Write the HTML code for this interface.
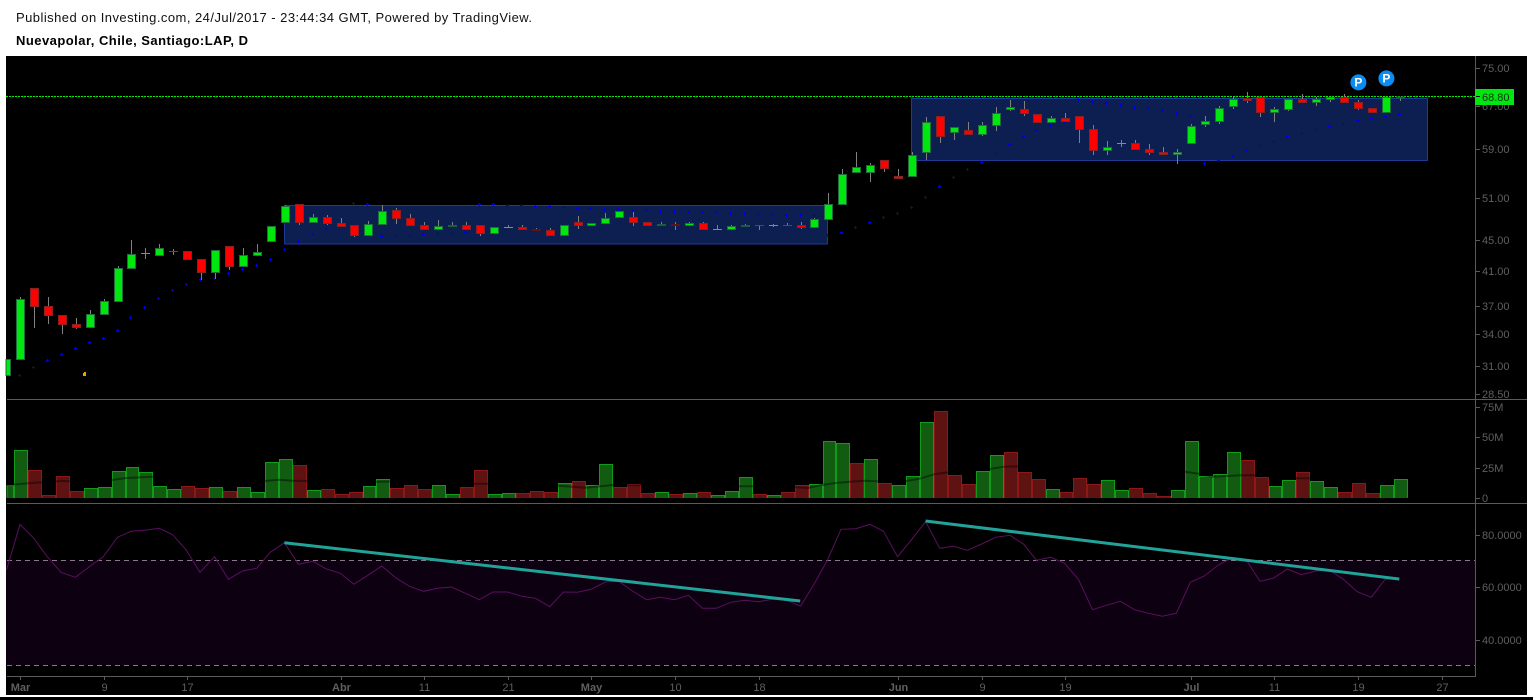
<!DOCTYPE html>
<html><head><meta charset="utf-8"><title>Nuevapolar, Chile, Santiago:LAP, D</title>
<style>html,body{margin:0;padding:0;background:#fff;width:1533px;height:700px;overflow:hidden}svg{display:block}text{font-family:"Liberation Sans",sans-serif}</style></head>
<body>
<svg xmlns="http://www.w3.org/2000/svg" width="1533" height="700" viewBox="0 0 1533 700">
<rect width="1533" height="700" fill="#fff"/>
<text x="16" y="22" font-size="13" fill="#111" textLength="516" lengthAdjust="spacing">Published on Investing.com, 24/Jul/2017 - 23:44:34 GMT, Powered by TradingView.</text>
<text x="16" y="45" font-size="13" font-weight="bold" fill="#000" textLength="232" lengthAdjust="spacing">Nuevapolar, Chile, Santiago:LAP, D</text>
<rect x="6" y="56" width="1521" height="639" fill="#000"/>
<rect x="0" y="697" width="1533" height="3" fill="#000"/>

<!-- blue boxes -->
<g shape-rendering="crispEdges" fill="#0d1e50" stroke="#1c3a96">
<rect x="284.5" y="205.5" width="543" height="38.5"/>
<rect x="911.5" y="98.5" width="516" height="62"/>
</g>

<!-- SAR crosses -->
<path shape-rendering="crispEdges" fill="none" stroke="#0000d8" d="M18 375.5h3m-1.5-1.5v3M32 367.5h3m-1.5-1.5v3M46 360.5h3m-1.5-1.5v3M60 354.5h3m-1.5-1.5v3M74 348.5h3m-1.5-1.5v3M88 342.5h3m-1.5-1.5v3M102 338.5h3m-1.5-1.5v3M116 330.5h3m-1.5-1.5v3M129 317.5h3m-1.5-1.5v3M143 307.5h3m-1.5-1.5v3M157 298.5h3m-1.5-1.5v3M171 290.5h3m-1.5-1.5v3M185 284.5h3m-1.5-1.5v3M199 279.5h3m-1.5-1.5v3M213 278.5h3m-1.5-1.5v3M227 273.5h3m-1.5-1.5v3M241 269.5h3m-1.5-1.5v3M255 265.5h3m-1.5-1.5v3M269 259.5h3m-1.5-1.5v3M283 249.5h3m-1.5-1.5v3M297 241.5h3m-1.5-1.5v3M311 234.5h3m-1.5-1.5v3M325 228.5h3m-1.5-1.5v3M352 203.5h3m-1.5-1.5v3M366 204.5h3m-1.5-1.5v3M380 236.5h3m-1.5-1.5v3M394 235.5h3m-1.5-1.5v3M408 235.5h3m-1.5-1.5v3M422 234.5h3m-1.5-1.5v3M436 233.5h3m-1.5-1.5v3M450 233.5h3m-1.5-1.5v3M464 232.5h3m-1.5-1.5v3M478 204.5h3m-1.5-1.5v3M492 204.5h3m-1.5-1.5v3M506 205.5h3m-1.5-1.5v3M520 205.5h3m-1.5-1.5v3M534 206.5h3m-1.5-1.5v3M548 206.5h3m-1.5-1.5v3M562 207.5h3m-1.5-1.5v3M576 208.5h3m-1.5-1.5v3M589 208.5h3m-1.5-1.5v3M603 209.5h3m-1.5-1.5v3M617 209.5h3m-1.5-1.5v3M631 210.5h3m-1.5-1.5v3M645 210.5h3m-1.5-1.5v3M659 211.5h3m-1.5-1.5v3M673 211.5h3m-1.5-1.5v3M687 212.5h3m-1.5-1.5v3M701 212.5h3m-1.5-1.5v3M715 212.5h3m-1.5-1.5v3M729 213.5h3m-1.5-1.5v3M743 213.5h3m-1.5-1.5v3M757 214.5h3m-1.5-1.5v3M771 214.5h3m-1.5-1.5v3M785 215.5h3m-1.5-1.5v3M799 215.5h3m-1.5-1.5v3M812 215.5h3m-1.5-1.5v3M826 235.5h3m-1.5-1.5v3M840 232.5h3m-1.5-1.5v3M854 227.5h3m-1.5-1.5v3M868 222.5h3m-1.5-1.5v3M882 217.5h3m-1.5-1.5v3M896 213.5h3m-1.5-1.5v3M910 207.5h3m-1.5-1.5v3M924 197.5h3m-1.5-1.5v3M938 186.5h3m-1.5-1.5v3M952 177.5h3m-1.5-1.5v3M966 169.5h3m-1.5-1.5v3M980 162.5h3m-1.5-1.5v3M994 153.5h3m-1.5-1.5v3M1008 144.5h3m-1.5-1.5v3M1022 136.5h3m-1.5-1.5v3M1035 130.5h3m-1.5-1.5v3M1049 125.5h3m-1.5-1.5v3M1063 122.5h3m-1.5-1.5v3M1077 99.5h3m-1.5-1.5v3M1091 101.5h3m-1.5-1.5v3M1105 103.5h3m-1.5-1.5v3M1119 105.5h3m-1.5-1.5v3M1133 107.5h3m-1.5-1.5v3M1147 108.5h3m-1.5-1.5v3M1161 110.5h3m-1.5-1.5v3M1175 113.5h3m-1.5-1.5v3M1189 116.5h3m-1.5-1.5v3M1203 163.5h3m-1.5-1.5v3M1217 160.5h3m-1.5-1.5v3M1231 156.5h3m-1.5-1.5v3M1245 150.5h3m-1.5-1.5v3M1258 145.5h3m-1.5-1.5v3M1272 141.5h3m-1.5-1.5v3M1286 136.5h3m-1.5-1.5v3M1300 133.5h3m-1.5-1.5v3M1314 129.5h3m-1.5-1.5v3M1328 126.5h3m-1.5-1.5v3M1342 123.5h3m-1.5-1.5v3M1356 120.5h3m-1.5-1.5v3M1370 118.5h3m-1.5-1.5v3M1384 116.5h3m-1.5-1.5v3M1398 114.5h3m-1.5-1.5v3"/>

<!-- price line -->
<path d="M6 96.5H1475" stroke="#00f000" stroke-dasharray="2 1" shape-rendering="crispEdges" fill="none"/>

<!-- wicks -->
<path shape-rendering="crispEdges" fill="none" stroke="#808080" d="M20.5 297V300M34.5 306V328M48.5 297V324M62.5 324V334M76.5 318V329M90.5 310V315M104.5 299V302M118.5 266V269M131.5 240V255M145.5 248V259M159.5 244V249M173.5 249V255M201.5 272V280M215.5 272V279M229.5 266V270M243.5 248V256M257.5 244V253M285.5 205V207M299.5 222V225M313.5 214V218M327.5 215V225M341.5 218V224M354.5 235V237M368.5 221V225M382.5 205V211M396.5 208V224M410.5 214V219M424.5 222V226M438.5 220V227M452.5 222V226M466.5 222V226M480.5 233V236M508.5 225V228M522.5 225V228M536.5 228V229M550.5 228V231M578.5 216V229M605.5 213V218M633.5 212V226M661.5 222V224M675.5 222V230M689.5 222V224M703.5 222V224M717.5 225V230M731.5 225V227M745.5 224V225M759.5 225V230M773.5 224V227M787.5 223V226M801.5 222V229M814.5 218V220M828.5 193V205M842.5 169V175M856.5 152V168M870.5 163V182M884.5 168V172M898.5 169V177M912.5 152V156M926.5 117V160M940.5 136V143M954.5 132V140M968.5 122V131M982.5 122V136M996.5 107V131M1010.5 100V111M1024.5 101V116M1051.5 116V119M1065.5 113V119M1079.5 129V143M1093.5 125V155M1107.5 141V155M1121.5 140V147M1135.5 140V144M1149.5 144V155M1163.5 147V153M1177.5 149V164M1191.5 124V127M1205.5 116V127M1219.5 106V124M1233.5 97V109M1247.5 92V103M1260.5 112V117M1274.5 107V122M1288.5 109V111M1302.5 94V100M1316.5 97V106M1330.5 99V102M1344.5 94V98M1358.5 100V110M1400.5 98V101"/>

<!-- green bodies -->
<path shape-rendering="crispEdges" fill="#00e60f" stroke="#1e6e3a" d="M6 359.5H10.5V375.5H6ZM16.5 299.5h8V359.5h-8zM86.5 314.5h8V327.5h-8zM100.5 301.5h8V314.5h-8zM114.5 268.5h8V301.5h-8zM127.5 254.5h8V268.5h-8zM155.5 248.5h8V255.5h-8zM211.5 250.5h8V272.5h-8zM239.5 255.5h8V266.5h-8zM253.5 252.5h8V255.5h-8zM267.5 226.5h8V241.5h-8zM281.5 206.5h8V222.5h-8zM309.5 217.5h8V222.5h-8zM364.5 224.5h8V235.5h-8zM378.5 211.5h8V224.5h-8zM434.5 226.5h8V229.5h-8zM490.5 227.5h8V233.5h-8zM560.5 225.5h8V235.5h-8zM587.5 223.5h8V225.5h-8zM601.5 218.5h8V223.5h-8zM615.5 211.5h8V217.5h-8zM685.5 223.5h8V225.5h-8zM727.5 226.5h8V229.5h-8zM810.5 219.5h8V227.5h-8zM824.5 204.5h8V219.5h-8zM838.5 174.5h8V204.5h-8zM852.5 167.5h8V172.5h-8zM866.5 165.5h8V172.5h-8zM908.5 155.5h8V176.5h-8zM922.5 122.5h8V152.5h-8zM950.5 127.5h8V132.5h-8zM978.5 125.5h8V134.5h-8zM992.5 113.5h8V125.5h-8zM1006.5 107.5h8V109.5h-8zM1047.5 118.5h8V122.5h-8zM1103.5 147.5h8V150.5h-8zM1173.5 152.5h8V154.5h-8zM1187.5 126.5h8V143.5h-8zM1201.5 121.5h8V124.5h-8zM1215.5 108.5h8V121.5h-8zM1229.5 99.5h8V106.5h-8zM1270.5 109.5h8V112.5h-8zM1284.5 99.5h8V109.5h-8zM1312.5 99.5h8V102.5h-8zM1326.5 97.5h8V99.5h-8zM1382.5 97.5h8V112.5h-8z"/>
<!-- red bodies -->
<path shape-rendering="crispEdges" fill="#ff0000" stroke="#8a2020" d="M30.5 288.5h8V306.5h-8zM44.5 306.5h8V315.5h-8zM58.5 315.5h8V324.5h-8zM72.5 324.5h8V327.5h-8zM183.5 251.5h8V259.5h-8zM197.5 259.5h8V272.5h-8zM225.5 246.5h8V266.5h-8zM295.5 204.5h8V222.5h-8zM323.5 217.5h8V223.5h-8zM337.5 223.5h8V226.5h-8zM350.5 225.5h8V235.5h-8zM392.5 210.5h8V218.5h-8zM406.5 218.5h8V225.5h-8zM420.5 225.5h8V229.5h-8zM462.5 225.5h8V229.5h-8zM476.5 225.5h8V233.5h-8zM518.5 227.5h8V229.5h-8zM546.5 230.5h8V235.5h-8zM574.5 222.5h8V225.5h-8zM629.5 217.5h8V222.5h-8zM643.5 222.5h8V225.5h-8zM699.5 223.5h8V229.5h-8zM797.5 225.5h8V227.5h-8zM880.5 160.5h8V168.5h-8zM894.5 176.5h8V178.5h-8zM936.5 116.5h8V136.5h-8zM964.5 130.5h8V134.5h-8zM1020.5 109.5h8V113.5h-8zM1033.5 114.5h8V122.5h-8zM1061.5 118.5h8V121.5h-8zM1075.5 116.5h8V129.5h-8zM1089.5 129.5h8V150.5h-8zM1131.5 143.5h8V149.5h-8zM1145.5 149.5h8V152.5h-8zM1159.5 152.5h8V154.5h-8zM1243.5 98.5h8V100.5h-8zM1256.5 97.5h8V112.5h-8zM1298.5 99.5h8V102.5h-8zM1340.5 97.5h8V102.5h-8zM1354.5 102.5h8V108.5h-8zM1368.5 108.5h8V112.5h-8z"/>
<!-- dim dojis -->
<path shape-rendering="crispEdges" fill="#1e5e36" stroke="#1e5e36" d="M448.5 225.5h8V226.5h-8zM657.5 224.5h8V225.5h-8zM741.5 225.5h8V226.5h-8zM1396.5 97h8V98h-8z"/>
<path shape-rendering="crispEdges" fill="#5e1414" stroke="#5e1414" d="M532.5 229.5h8V230.5h-8zM671.5 224.5h8V225.5h-8z"/>
<!-- thin bright dojis -->
<path shape-rendering="crispEdges" fill="none" stroke="#00e60f" d="M141 253.5h9M504 227.5h9M713 229.5h9M769 225.5h9M1117 143.5h9"/>
<path shape-rendering="crispEdges" fill="none" stroke="#ff0000" d="M169 251.5h9M755 225.5h9M783 225.5h9"/>

<!-- orange marker -->
<path d="M83 373h3v3h-3z M84 372h2v1h-2z" fill="#f59a0c" shape-rendering="crispEdges"/>

<!-- P badges -->
<circle cx="1358.4" cy="82.4" r="8" fill="#0a8cf5"/>
<circle cx="1386.4" cy="78.4" r="8" fill="#0a8cf5"/>
<text x="1358.4" y="86.6" font-size="12" font-weight="bold" fill="#fff" text-anchor="middle">P</text>
<text x="1386.4" y="82.6" font-size="12" font-weight="bold" fill="#fff" text-anchor="middle">P</text>

<!-- separators -->
<path shape-rendering="crispEdges" fill="none" stroke="#5a5a5a" d="M7 399.5H1527M7 503.5H1527M7 676.5H1475.5M1475.5 56V677"/>

<!-- volume bars -->
<path shape-rendering="crispEdges" fill="#125c12" stroke="#129a1c" d="M7 498V485.5H13.5V498M14.5 498V450.5H27.5V498M84.5 498V488.5H97.5V498M98.5 498V487.5H111.5V498M112.5 498V471.5H125.5V498M126.5 498V467.5H138.5V498M139.5 498V472.5H152.5V498M153.5 498V486.5H166.5V498M167.5 498V489.5H180.5V498M209.5 498V487.5H222.5V498M237.5 498V487.5H250.5V498M251.5 498V492.5H264.5V498M265.5 498V462.5H278.5V498M279.5 498V459.5H292.5V498M307.5 498V490.5H320.5V498M363.5 498V486.5H375.5V498M376.5 498V479.5H389.5V498M432.5 498V485.5H445.5V498M446.5 498V494.5H459.5V498M488.5 498V494.5H501.5V498M502.5 498V493.5H515.5V498M558.5 498V483.5H571.5V498M586.5 498V485.5H598.5V498M599.5 498V464.5H612.5V498M655.5 498V492.5H668.5V498M683.5 498V493.5H696.5V498M711.5 498V495.5H724.5V498M725.5 498V491.5H738.5V498M739.5 498V477.5H752.5V498M767.5 498V495.5H780.5V498M809.5 498V484.5H822.5V498M823.5 498V441.5H835.5V498M836.5 498V443.5H849.5V498M864.5 498V459.5H877.5V498M892.5 498V485.5H905.5V498M906.5 498V476.5H919.5V498M920.5 498V422.5H933.5V498M976.5 498V471.5H989.5V498M990.5 498V455.5H1003.5V498M1046.5 498V489.5H1059.5V498M1101.5 498V480.5H1114.5V498M1115.5 498V490.5H1128.5V498M1171.5 498V490.5H1184.5V498M1185.5 498V441.5H1198.5V498M1199.5 498V476.5H1212.5V498M1213.5 498V474.5H1226.5V498M1227.5 498V452.5H1240.5V498M1269.5 498V486.5H1281.5V498M1282.5 498V480.5H1295.5V498M1310.5 498V481.5H1323.5V498M1324.5 498V487.5H1337.5V498M1380.5 498V485.5H1393.5V498M1394.5 498V479.5H1407.5V498"/>
<path shape-rendering="crispEdges" fill="#5e1212" stroke="#8c1818" d="M28.5 498V470.5H41.5V498M42.5 498V495.5H55.5V498M56.5 498V476.5H69.5V498M70.5 498V491.5H83.5V498M181.5 498V486.5H194.5V498M195.5 498V488.5H208.5V498M223.5 498V491.5H236.5V498M293.5 498V465.5H306.5V498M321.5 498V489.5H334.5V498M335.5 498V494.5H348.5V498M349.5 498V492.5H362.5V498M390.5 498V488.5H403.5V498M404.5 498V485.5H417.5V498M418.5 498V489.5H431.5V498M460.5 498V487.5H473.5V498M474.5 498V470.5H487.5V498M516.5 498V493.5H529.5V498M530.5 498V491.5H543.5V498M544.5 498V492.5H557.5V498M572.5 498V481.5H585.5V498M613.5 498V487.5H626.5V498M627.5 498V484.5H640.5V498M641.5 498V493.5H654.5V498M669.5 498V494.5H682.5V498M697.5 498V492.5H710.5V498M753.5 498V494.5H766.5V498M781.5 498V492.5H794.5V498M795.5 498V485.5H808.5V498M850.5 498V463.5H863.5V498M878.5 498V483.5H891.5V498M934.5 498V411.5H947.5V498M948.5 498V475.5H961.5V498M962.5 498V484.5H975.5V498M1004.5 498V452.5H1017.5V498M1018.5 498V472.5H1031.5V498M1032.5 498V479.5H1045.5V498M1060.5 498V492.5H1072.5V498M1073.5 498V478.5H1086.5V498M1087.5 498V484.5H1100.5V498M1129.5 498V488.5H1142.5V498M1143.5 498V493.5H1156.5V498M1157.5 498V496.5H1170.5V498M1241.5 498V460.5H1254.5V498M1255.5 498V477.5H1268.5V498M1296.5 498V472.5H1309.5V498M1338.5 498V492.5H1351.5V498M1352.5 498V483.5H1365.5V498M1366.5 498V493.5H1379.5V498"/>
<!-- volume MA -->
<polyline fill="none" stroke="#000" stroke-opacity=".4" stroke-width="2" points="7,485 20,484 35,482.7 62,481 100,482 112,480 126,478 152,476.7 172,478 200,481 230,482 265,481 279,479.7 293,480.7 306,481 340,482 376,481.7 390,481.5 445,484 474,483.7 488,483.7 520,484 558,485.7 586,487.7 613,485 641,485.3 690,486 739,486.3 753,486.3 790,487 808,488 821.7,485 835.7,483 850,481.7 864,480.7 877.7,481.3 906.7,481 920,478.7 934,474.3 947.7,472.3 990,469 1004,466.7 1017.7,466.3 1090,470 1185,471.7 1198.7,473.7 1212.7,476.7 1226.7,476 1241,475.3 1254.7,475.3 1296,478.3 1310,478.3 1340,478 1407,477"/>

<!-- RSI band -->
<rect x="6" y="560" width="1469" height="105" fill="#0d0010"/>
<path fill="none" stroke="#887a88" stroke-dasharray="5 4" shape-rendering="crispEdges" d="M7 560.5H1475M7 665.5H1475"/>
<polyline fill="none" stroke="#5c0f60" stroke-width="1" points="6.5,570 20,524.3 33.8,538.3 47.3,556.7 61,572.3 75.3,577.3 89,567 103.3,556.7 117.5,537.3 131,531.3 144.7,530.3 159,528.3 172.7,534.7 186.2,550 200,572.3 214.5,556.7 228.4,579.3 242.5,571 256.7,568.3 270.2,552.3 284.4,542.7 298.5,564.3 312.7,561.3 326.5,569 340.4,573.3 353.8,584.3 367.3,575.7 381.8,566 395.6,577.7 409.5,586.3 423.6,591.3 437.5,588.3 451.3,587 465.5,593.3 479.3,599.7 493,592 507.6,592 521.8,596.3 535.6,598.3 549.8,606.7 563.6,592 577.3,592.3 591,589.3 605.3,582 619,581.3 632.5,591 646.4,599.7 660.2,597.3 674.7,599.7 688.5,595.3 702.4,608.3 716.2,608.3 730.7,602.3 744.5,600.3 758.4,601.7 772.2,599.3 786.4,600 800.5,606.3 813.6,585 827,561 841,529.3 855.8,528.7 870,524.3 883.5,531.3 897.6,556.7 911.8,539.3 925.6,521.7 939.8,548.3 953.6,546.3 967.5,550.3 981.6,544 995.5,537.3 1010,535.3 1023.8,544.3 1036.5,560.3 1050.7,557.3 1064.5,563.3 1078.4,579.3 1092.5,609.7 1106.4,605.3 1120.5,601.3 1134.4,609.7 1148.3,613.3 1162.3,616.3 1176.3,613.3 1190.3,582.3 1204.3,576 1218.3,565 1232.3,557.7 1246.3,560 1260,581.3 1273.3,578.3 1287.3,569 1301.3,574.7 1315.3,571 1329.3,570 1343.3,579.3 1357.3,591.7 1371.3,597.3 1385.3,579 1399.3,579.3"/>
<!-- trend lines -->
<path fill="none" stroke="#22a399" stroke-width="3" d="M284.4 542.7L800.2 601M925.6 521L1399.3 579"/>

<!-- axis ticks -->
<path shape-rendering="crispEdges" fill="none" stroke="#5a5a5a" d="M1476 68.5h4M1476 106.5h4M1476 149.5h4M1476 198.5h4M1476 240.5h4M1476 271.5h4M1476 306.5h4M1476 334.5h4M1476 366.5h4M1476 394.5h4M1476 407.5h4M1476 437.5h4M1476 468.5h4M1476 498.5h4M1476 535.5h4M1476 587.5h4M1476 640.5h4M20.5 677v3M104.5 677v3M187.5 677v3M341.5 677v3M424.5 677v3M508.5 677v3M591.5 677v3M675.5 677v3M759.5 677v3M898.5 677v3M982.5 677v3M1065.5 677v3M1191.5 677v3M1274.5 677v3M1358.5 677v3M1442.5 677v3"/>

<!-- price axis labels -->
<g font-size="11" fill="#5f5f5f">
<text x="1482" y="72">75.00</text>
<text x="1482" y="110">67.00</text>
<text x="1482" y="153">59.00</text>
<text x="1482" y="202">51.00</text>
<text x="1482" y="244">45.00</text>
<text x="1482" y="275">41.00</text>
<text x="1482" y="310">37.00</text>
<text x="1482" y="338">34.00</text>
<text x="1482" y="370">31.00</text>
<text x="1482" y="398">28.50</text>
<text x="1482" y="411">75M</text>
<text x="1482" y="441">50M</text>
<text x="1482" y="472">25M</text>
<text x="1482" y="502">0</text>
<text x="1482" y="539">80.0000</text>
<text x="1482" y="591">60.0000</text>
<text x="1482" y="644">40.0000</text>
</g>
<rect x="1475" y="89" width="39" height="16" fill="#00e60f"/>
<path d="M1476 96.5h4" stroke="#000" shape-rendering="crispEdges"/>
<text x="1482" y="101" font-size="11" fill="#143014">68.80</text>

<!-- date labels -->
<g font-size="11" fill="#5f5f5f" text-anchor="middle">
<text x="20.5" y="691" font-weight="bold">Mar</text>
<text x="104.5" y="691">9</text>
<text x="187.5" y="691">17</text>
<text x="341.5" y="691" font-weight="bold">Abr</text>
<text x="424.5" y="691">11</text>
<text x="508.5" y="691">21</text>
<text x="591.5" y="691" font-weight="bold">May</text>
<text x="675.5" y="691">10</text>
<text x="759.5" y="691">18</text>
<text x="898.5" y="691" font-weight="bold">Jun</text>
<text x="982.5" y="691">9</text>
<text x="1065.5" y="691">19</text>
<text x="1191.5" y="691" font-weight="bold">Jul</text>
<text x="1274.5" y="691">11</text>
<text x="1358.5" y="691">19</text>
<text x="1442.5" y="691">27</text>
</g>
</svg>
</body></html>
